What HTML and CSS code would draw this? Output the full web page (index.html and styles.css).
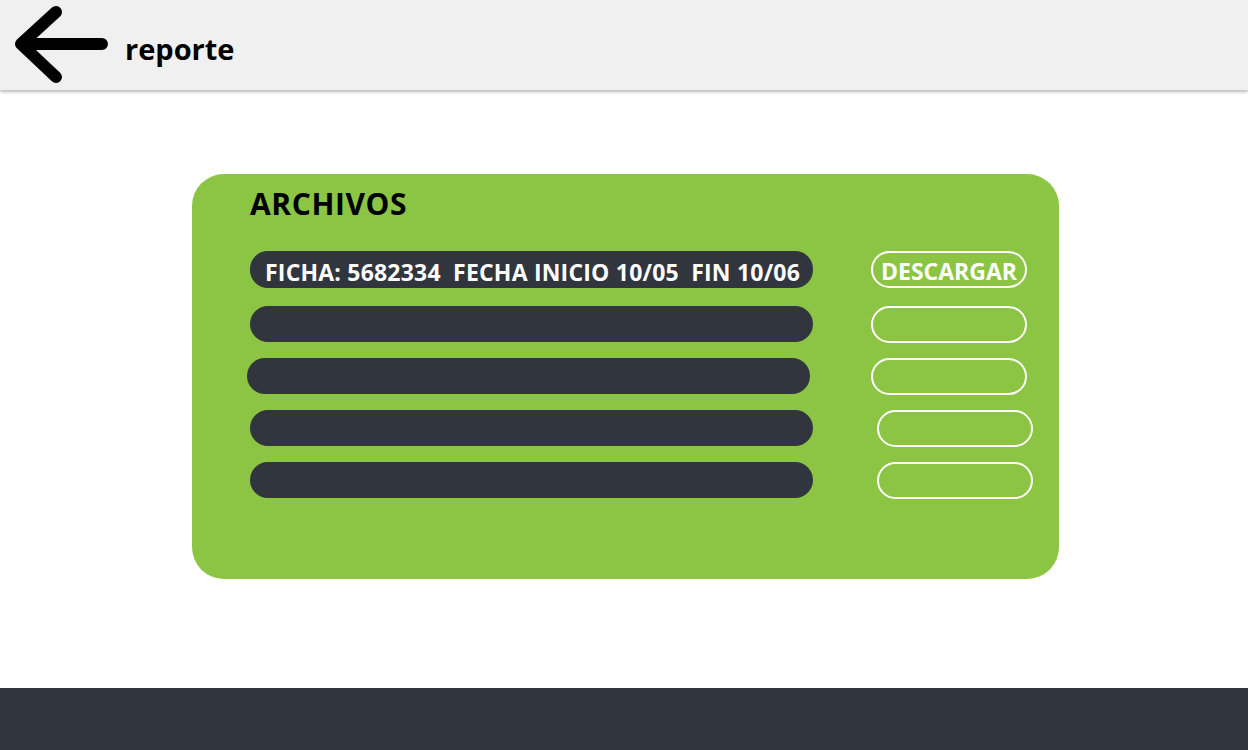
FILE: index.html
```html
<!DOCTYPE html>
<html lang="es">
<head>
<meta charset="utf-8">
<title>reporte</title>
<link rel="stylesheet" href="styles.css">
</head>
<body>
<div class="page">
  <header class="topbar">
    <svg class="back" width="120" height="90" viewBox="0 0 120 90" aria-hidden="true">
      <path d="M102 44 H21 M56 12 L21 44 L56 77" fill="none" stroke="#000" stroke-width="12" stroke-linecap="round" stroke-linejoin="round"/>
    </svg>
    <h1 class="title">reporte</h1>
  </header>
  <main class="content">
    <section class="card">
      <h2 class="card-title">ARCHIVOS</h2>
      <div class="rows">
        <div class="row first">
          <div class="bar"><span>FICHA: 5682334&nbsp; FECHA INICIO 10/05&nbsp; FIN 10/06</span></div>
          <button class="btn"><span>DESCARGAR</span></button>
        </div>
        <div class="row">
          <div class="bar"></div>
          <button class="btn"></button>
        </div>
        <div class="row">
          <div class="bar shift-left"></div>
          <button class="btn"></button>
        </div>
        <div class="row">
          <div class="bar"></div>
          <button class="btn shift-right"></button>
        </div>
        <div class="row">
          <div class="bar"></div>
          <button class="btn shift-right"></button>
        </div>
      </div>
    </section>
  </main>
  <footer class="footer"></footer>
</div>
</body>
</html>
```

FILE: styles.css
```css
* { box-sizing: border-box; }
html, body { margin: 0; padding: 0; }
body {
  font-family: "Open Sans", "Noto Sans", "Liberation Sans", sans-serif;
  background: #ffffff;
}
.page {
  height: 750px;
  display: flex;
  flex-direction: column;
  overflow: hidden;
}
.topbar {
  height: 90px;
  flex: 0 0 90px;
  background: #f0f0f0;
  display: flex;
  align-items: center;
  box-shadow: 0 2px 3px rgba(0,0,0,0.28);
  position: relative;
  z-index: 1;
}
.back { display: block; flex: 0 0 auto; }
.title {
  margin: 0 0 0 5px;
  font-size: 29px;
  font-weight: 700;
  color: #000;
  line-height: 1;
  padding-top: 6px;
}
.content {
  flex: 1 1 auto;
  padding-top: 84px;
  padding-left: 192px;
}
.card {
  width: 867px;
  height: 405px;
  background: #8bc543;
  border-radius: 32px;
  padding: 10px 0 0 58px;
}
.card-title {
  margin: 0;
  font-size: 30px;
  font-weight: 700;
  letter-spacing: 0.6px;
  color: #000;
  line-height: 40px;
}
.rows {
  margin-top: 27px;
  display: flex;
  flex-direction: column;
  gap: 16px;
}
.row {
  display: flex;
  align-items: center;
  gap: 58px;
  height: 36px;
}
.row.first { height: 37px; margin-bottom: 2px; }
.bar {
  width: 563px;
  height: 100%;
  background: #31353e;
  border-radius: 18px;
  display: flex;
  align-items: center;
  padding: 5px 0 0 15px;
}
.bar span {
  color: #fff;
  font-size: 23px;
  font-weight: 700;
  letter-spacing: 0.2px;
  white-space: pre;
  line-height: 1;
}
.bar.shift-left { margin-left: -3px; margin-right: 3px; }
.btn {
  width: 156px;
  height: 37px;
  border: 2px solid #ffffff;
  border-radius: 19px;
  background: transparent;
  color: #fff;
  font-family: inherit;
  font-size: 23px;
  font-weight: 700;
  padding: 3px 0 0 0;
  line-height: 1;
  display: flex;
  align-items: center;
  justify-content: center;
}
.btn.shift-right { margin-left: 6px; }
.footer {
  flex: 0 0 62px;
  height: 62px;
  background: #31353e;
}
```
